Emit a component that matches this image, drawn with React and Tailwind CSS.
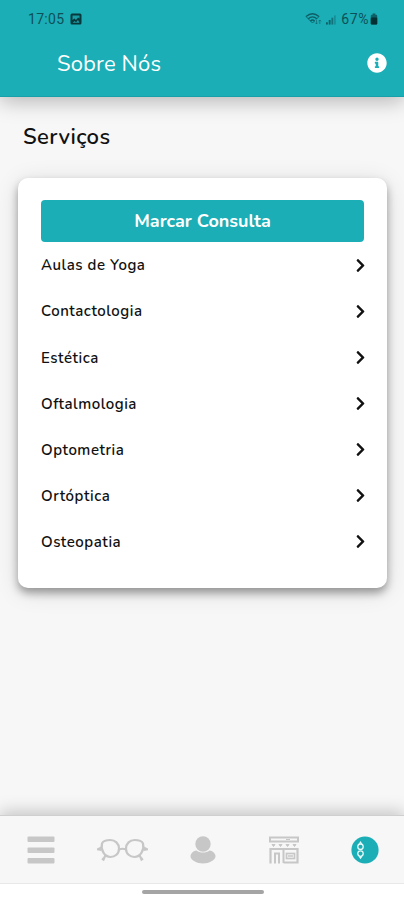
// App.jsx
import { FaInfoCircle, FaChevronRight } from "react-icons/fa";

const services = [
  "Aulas de Yoga",
  "Contactologia",
  "Estética",
  "Oftalmologia",
  "Optometria",
  "Ortóptica",
  "Osteopatia",
];

function PhotoIcon() {
  return (
    <svg width="12" height="12" viewBox="0 0 12 12">
      <rect x="0.5" y="0.5" width="11" height="11" rx="1.5" fill="#07383c" />
      <path d="M2.500 2.500h7v3L8 4.500 6 7 4.500 5.500 2.500 7z" fill="#1a9ca4" />
      <path d="M2.500 9.800L4.500 8 6 9.200 8 7l1.500 2.800z" fill="#1a9ca4" />
    </svg>
  );
}

function WifiIcon() {
  return (
    <svg width="17" height="14" viewBox="0 0 17 14" fill="none" stroke="#0e5e65" strokeWidth="1.3">
      <path d="M1 4.500Q7.500-1 14 4.500M3.200 6.800Q7.500 3 11.800 6.800M5.400 9Q7.500 7 9.600 9" />
      <path d="M1 4.500L7.500 11l2-2M14 4.500l-3 3" strokeWidth="0.9" />
      <path d="M11.500 8v4m-1.300-1.300l1.300 1.300 1.200-1.300M14.800 12V8m-1.200 1.300L14.800 8 16 9.300" strokeWidth="0.6" />
    </svg>
  );
}

function SignalIcon() {
  return (
    <svg width="12" height="10" viewBox="0 0 12 11" fill="#0e5e65">
      <rect x="0.500" y="8" width="2" height="2.500" />
      <rect x="3.500" y="5.500" width="2" height="5" />
      <rect x="6.500" y="3" width="2" height="7.500" opacity="0.75" />
      <rect x="9.500" y="0.500" width="1.600" height="10" opacity="0.45" />
    </svg>
  );
}

function BatteryIcon() {
  return (
    <svg width="8" height="12" viewBox="0 0 8 13">
      <rect x="2.500" y="0.500" width="3" height="2" fill="#0e5e65" />
      <rect x="0.500" y="2" width="7" height="10.500" rx="1.300" fill="#0e6068" />
      <rect x="0.500" y="5" width="7" height="7.500" rx="1" fill="#042f33" />
    </svg>
  );
}

function MenuIcon() {
  return (
    <svg width="28" height="28" viewBox="0 0 28 28" fill="#c7c7c7">
      <rect x="0.500" y="0.500" width="27" height="5.500" rx="1" />
      <rect x="0.500" y="11.500" width="27" height="5.500" rx="1" />
      <rect x="0.500" y="22" width="27" height="5.500" rx="1" />
    </svg>
  );
}

function GlassesIcon() {
  return (
    <svg width="51" height="24" viewBox="0 0 51 24" fill="none" stroke="#c7c7c7" strokeWidth="2.200">
      <path d="M5 5.500C6.500 2 10 2 13.500 2c4.500 0 8.500 3.500 8.500 8.500 0 5.500-4 8.500-8.500 8.500C7.500 19 3.500 12 5 5.500z" />
      <path d="M46 5.500C44.500 2 41 2 37.500 2 33 2 29 5.500 29 10.500c0 5.500 4 8.500 8.500 8.500 6 0 10-7 8.500-13.500z" />
      <path d="M22 11.500q3.500-1.500 7 0M4.500 9.500L.8 11.300l3.700.7M46.500 9.500l3.700 1.800-3.700.7" />
      <path d="M8.500 17l-2 4.500-1.500-1M42.500 17l2 4.500 1.500-1" />
    </svg>
  );
}

function UserIcon() {
  return (
    <svg width="26" height="28" viewBox="0 0 26 28" fill="#c7c7c7">
      <circle cx="13" cy="8" r="7.700" />
      <path d="M6.500 14.500C2.500 15 .5 18 .5 20.500.5 24 7 27.500 13 27.500s12.500-3.500 12.500-7c0-2.500-2-5.500-6-6-3.500 2.700-9.500 2.700-13 0z" />
    </svg>
  );
}

function StoreIcon() {
  return (
    <svg width="30" height="28" viewBox="0 0 30 28" fill="none" stroke="#c7c7c7">
      <rect x="1" y="1.500" width="28" height="4" strokeWidth="2" />
      <path d="M17 3.500h4" />
      <path d="M3 8.500h3L4.500 10.500zM10 8.500h3l-1.500 2zM17 8.500h3l-1.500 2zM24 8.500h3l-1.500 2z" fill="#c7c7c7" />
      <path d="M1.500 27.500V13h27v13.500H14.500" strokeWidth="2.200" />
      <path d="M6 27.500V17.500h4V27.500" strokeWidth="2" />
      <path d="M14.500 13v14" strokeWidth="2" />
      <rect x="17.500" y="17.500" width="8" height="5" strokeWidth="1.700" />
      <path d="M19 20h5" strokeWidth="1.500" />
    </svg>
  );
}

function AboutIcon() {
  return (
    <svg width="28" height="28" viewBox="0 0 28 28">
      <circle cx="14" cy="14" r="13.600" fill="#1baeb6" />
      <g fill="none" stroke="#e8f8f8" strokeWidth="1.300">
        <circle cx="9.500" cy="10.700" r="2.700" />
        <circle cx="9.500" cy="17.600" r="2.700" />
        <path d="M8.300 8L9.500 6.200 10.700 8M8.300 20.300l1.200 1.800 1.200-1.800" />
      </g>
    </svg>
  );
}

export default function App() {
  return (
    <div className="w-full h-[900px] flex flex-col overflow-hidden bg-[#f7f7f7] text-[#111] font-['Nunito','Noto_Sans',sans-serif]">
      {/* HEADER */}
      <header className="h-[97px] shrink-0 bg-[#1baeb6] border-b border-[#17a0a8] shadow-[0_4px_20px_rgba(0,0,0,0.28)] z-10">
        <div className="h-[38px] pl-[28px] pr-[26px] flex items-center justify-between font-[Roboto,sans-serif] text-[14px] text-[#0e5057]">
          <div className="flex items-center gap-[6px]">
            <span className="tracking-[0.3px]">17:05</span>
            <PhotoIcon />
          </div>
          <div className="flex items-center">
            <WifiIcon />
            <span className="ml-[3px] mr-[4px] mt-[2px]">
              <SignalIcon />
            </span>
            <span className="mr-px tracking-[0.6px]">67%</span>
            <BatteryIcon />
          </div>
        </div>
        <div className="h-[50px] pl-[57px] pr-[17px] flex items-center justify-between text-white">
          <h1 className="pt-px text-[22px] leading-none tracking-[0.15px]">Sobre Nós</h1>
          <FaInfoCircle size={20} />
        </div>
      </header>

      {/* MAIN CONTENT */}
      <main className="flex-1 pl-[18px] pr-[17px]">
        <h2 className="mt-[26px] ml-[5px] h-[28px] text-[22px] leading-[29px] font-semibold tracking-[0.4px]">
          Serviços
        </h2>

        <section className="mt-[27px] h-[410px] rounded-[10px] bg-white px-[23px] pt-[22px] shadow-[0_5px_9px_rgba(0,0,0,0.35),0_4px_24px_rgba(0,0,0,0.12)]">
          <button className="w-full h-[42px] pt-px block rounded-[4px] bg-[#1baeb6] text-white text-[18px] leading-[41px] font-bold">
            Marcar Consulta
          </button>
          <ul>
            {services.map((name) => (
              <li key={name} className="h-[46.15px] flex items-center justify-between">
                <span className="pt-px text-[15px] font-semibold tracking-[0.52px]">{name}</span>
                <FaChevronRight size={15} className="-mr-[4px]" />
              </li>
            ))}
          </ul>
        </section>
      </main>

      {/* BOTTOM NAV */}
      <nav className="h-[69px] shrink-0 flex items-center border-t border-[#cfcfcf] border-b border-b-[#e8e8e8] bg-[#f7f7f7] shadow-[0_-3px_16px_rgba(0,0,0,0.22)] z-10">
        {[MenuIcon, GlassesIcon, UserIcon, StoreIcon, AboutIcon].map((Icon, i) => (
          <div key={i} className="flex-1 flex justify-center pl-[2px] pt-px">
            <Icon />
          </div>
        ))}
      </nav>
      <div className="h-4 shrink-0 flex justify-center bg-white z-20">
        <div className="mt-[6px] ml-px w-[122px] h-1 rounded-full bg-[#a5a5a5]" />
      </div>
    </div>
  );
}
